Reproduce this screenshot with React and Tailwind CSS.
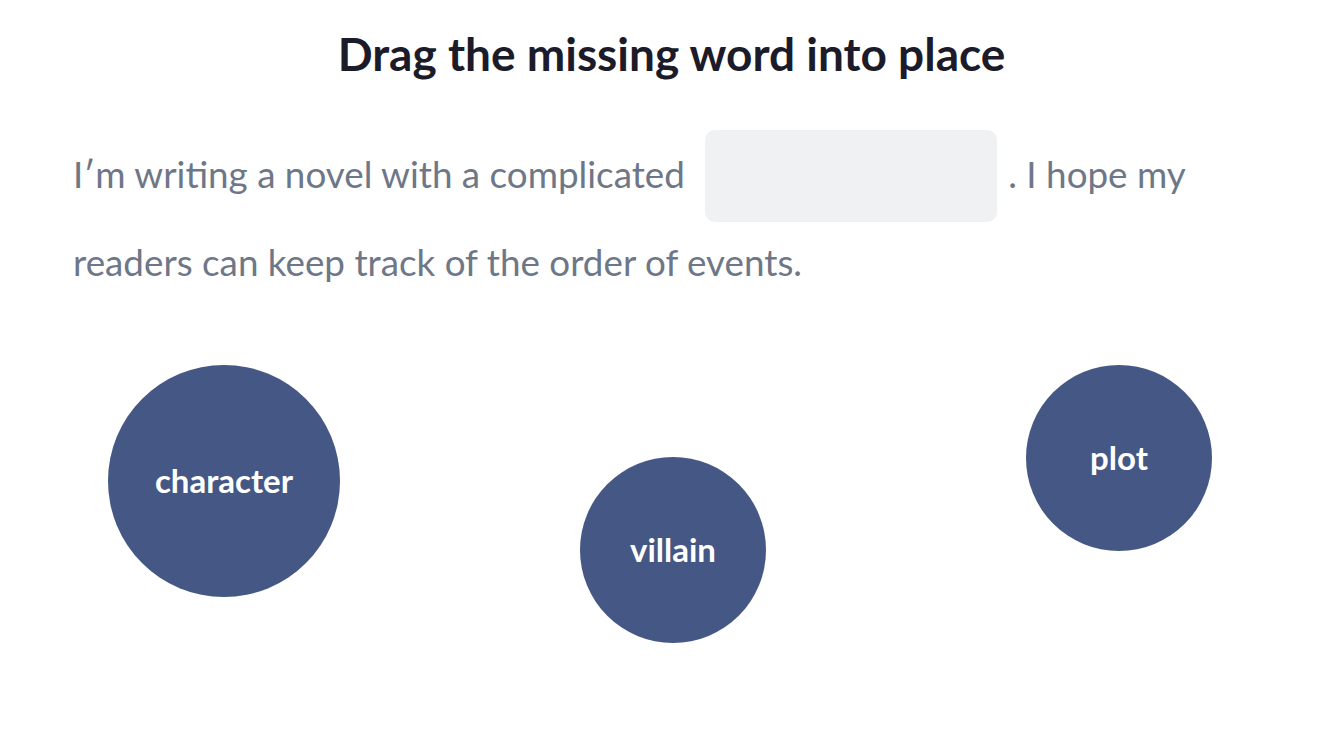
const words = [
  { label: 'character', className: 'left-[108px] top-[365px] h-[232px] w-[232px]' },
  { label: 'villain', className: 'left-[580px] top-[457px] h-[186px] w-[186px]' },
  { label: 'plot', className: 'left-[1026px] top-[365px] h-[186px] w-[186px]' },
]

function WordBubble({ label, className }) {
  return (
    <div
      className={`absolute flex items-center justify-center rounded-full bg-[#455785] text-[33px] font-bold text-white ${className}`}
    >
      {label}
    </div>
  )
}

export default function App() {
  return (
    <div className="relative h-[738px] w-full overflow-hidden bg-white font-['Lato',sans-serif]">
      <h1 className="pl-[12px] pt-[26px] text-center text-[46px] font-bold leading-[56px] text-[#1c1b29]">
        Drag the missing word into place
      </h1>

      <p className="mt-[48px] pl-[73px] pr-[100px] text-[36.8px] leading-[88px] text-[#6e7787]">
        I′m writing a novel with a complicated{' '}
        <span className="-mt-[13px] -mb-[7px] ml-[11px] mr-[11px] inline-block h-[92px] w-[292px] rounded-[10px] bg-[#f0f1f3] align-middle" />
        . I hope my readers can keep track of the order of events.
      </p>

      {words.map((w) => (
        <WordBubble key={w.label} label={w.label} className={w.className} />
      ))}
    </div>
  )
}
